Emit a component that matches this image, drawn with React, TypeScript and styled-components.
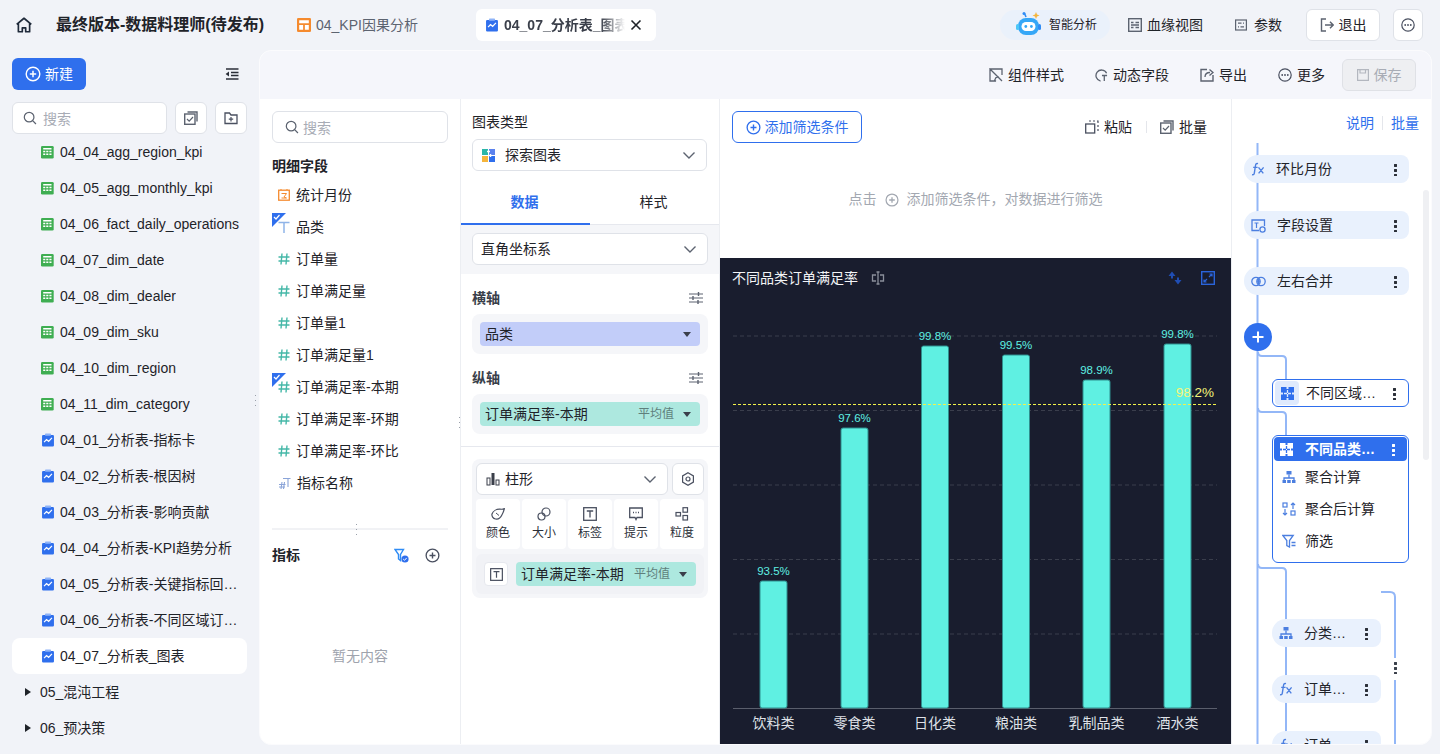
import React from 'react';
import styled, { createGlobalStyle } from 'styled-components';

const Global = createGlobalStyle`
  html, body { margin: 0; padding: 0; height: 100%; overflow: hidden; }
  body { font-family: "Liberation Sans", "Noto Sans CJK SC", sans-serif; font-size: 14px; line-height: 1.5; color: #1f2329; background: #f1f3f8; }
  * { box-sizing: border-box; }
`;

const Page = styled.div`width: 1440px; height: 754px; display: flex; flex-direction: column; background: #f1f3f8; overflow: hidden;`;
const Header = styled.header`height: 50px; flex: none; display: flex; align-items: center; position: relative;`;
const HomeBtn = styled.div`width: 47px; height: 50px; padding-left: 15px; display: flex; align-items: center;`;
const Title = styled.div`margin-left: 9px; width: 233px; font-size: 16px; font-weight: 700; white-space: nowrap; color: #1f2329;`;
const Tab = styled.div`display: flex; align-items: center; gap: 5px; height: 32px; width: 187px; padding-left: 8px; color: #5c6370; font-size: 14px;`;
const ActiveTab = styled.div`display: flex; align-items: center; gap: 5px; height: 32px; width: 180px; padding-left: 9px; background: #fff; border-radius: 6px; font-weight: 700; color: #3a3f4a; font-size: 14px;`;
const FadeText = styled.span`width: 121px; overflow: hidden; white-space: nowrap; -webkit-mask-image: linear-gradient(90deg, #000 80%, transparent 100%); mask-image: linear-gradient(90deg, #000 80%, transparent 100%);`;
const HeaderRight = styled.div`margin-left: auto; margin-right: 17px; display: flex; align-items: center;`;
const AiPill = styled.div`width: 110px; height: 30px; border-radius: 15px; background: #eaf1fb; display: flex; align-items: center; gap: 6px; padding-left: 15px; font-size: 12px; margin-right: 18px; white-space: nowrap;`;
const HeadLink = styled.div<{ $mr: number; $gap: number }>`display: flex; align-items: center; gap: ${p => p.$gap}px; margin-right: ${p => p.$mr}px; font-size: 14px; white-space: nowrap;`;
const WhiteBtn = styled.div<{ $w: number }>`width: ${p => p.$w}px; height: 32px; background: #fff; border: 1px solid #dfe2e8; border-radius: 6px; display: flex; align-items: center; justify-content: center; gap: 5px; font-size: 14px;`;
const Spacer13 = styled.div`width: 13px;`;

const Body = styled.div`flex: 1; display: flex; min-height: 0; padding-bottom: 9px; position: relative;`;
const Sidebar = styled.aside`width: 259px; flex: none; display: flex; flex-direction: column; padding-top: 8px; position: relative; overflow: hidden;`;
const SideTop = styled.div`display: flex; align-items: center; justify-content: space-between; padding: 0 20px 0 12px; height: 32px;`;
const NewBtn = styled.div`width: 74px; height: 32px; border-radius: 6px; background: #2f6fed; color: #fff; display: flex; align-items: center; justify-content: center; gap: 4px; font-size: 14px;`;
const SearchRow = styled.div`display: flex; gap: 8px; margin: 12px 0 0 12px;`;
const SearchBox = styled.div<{ $w: number; $pl: number; $gap: number }>`width: ${p => p.$w}px; height: 32px; background: #fff; border: 1px solid #dfe2e8; border-radius: 6px; display: flex; align-items: center; gap: ${p => p.$gap}px; padding-left: ${p => p.$pl}px; color: #a8acb5; font-size: 14px; line-height: normal; flex: none;`;
const SquareBtn = styled.div`width: 32px; height: 32px; background: #fff; border: 1px solid #dfe2e8; border-radius: 6px; display: flex; align-items: center; justify-content: center; flex: none;`;
const TreeList = styled.div`display: flex; flex-direction: column; margin-left: 12px; width: 235px;`;
const TreeRow = styled.div<{ $active?: boolean; $folder?: boolean }>`height: 36px; display: flex; align-items: center; gap: ${p => p.$folder ? 9 : 5}px; padding-left: ${p => p.$folder ? 13 : 29}px; border-radius: 8px; background: ${p => p.$active ? '#fff' : 'transparent'}; font-size: 14px; color: #1f2329; white-space: nowrap;`;
const Ellip = styled.span`overflow: hidden; text-overflow: ellipsis; white-space: nowrap; min-width: 0;`;
const Arrow = styled.i`width: 0; height: 0; border-left: 6px solid #1f2329; border-top: 4px solid transparent; border-bottom: 4px solid transparent;`;
const Grip = styled.div<{ $l: number; $t: number }>`position: absolute; left: ${p => p.$l}px; top: ${p => p.$t}px; width: 5px; height: 14px; background-image: radial-gradient(circle, #9aa0aa 0.8px, transparent 1px); background-size: 5px 5px; z-index: 5;`;

const Main = styled.main`flex: 1; margin-right: 8px; display: flex; flex-direction: column; border-radius: 12px; background: #fff; border: 1px solid #fbfbfd; overflow: hidden; min-width: 0; position: relative;`;
const Toolbar = styled.div`height: 48px; flex: none; background: #f5f6fb; display: flex; align-items: center; justify-content: flex-end; padding-right: 15px;`;
const ToolItem = styled.div<{ $mr: number }>`display: flex; align-items: center; gap: 5px; margin-right: ${p => p.$mr}px; font-size: 14px; white-space: nowrap;`;
const SaveBtn = styled.div`width: 74px; height: 32px; border: 1px solid #dfe1e6; background: #eeeff2; border-radius: 6px; color: #a8acb5; display: flex; align-items: center; justify-content: center; gap: 5px;`;
const Columns = styled.div`flex: 1; display: flex; min-height: 0;`;

const FieldCol = styled.section`width: 201px; flex: none; border-right: 1px solid #eceef2; padding: 12px 0 0 12px; display: flex; flex-direction: column; position: relative;`;
const SectionTitle = styled.div`font-size: 14px; font-weight: 700; color: #1f2329; line-height: 20px;`;
const DetailTitle = styled(SectionTitle)`margin-top: 13px;`;
const FieldList = styled.div`display: flex; flex-direction: column; margin-top: 3px;`;
const FieldRow = styled.div`height: 32px; display: flex; align-items: center; gap: 6px; padding-left: 6px; position: relative; font-size: 14px; white-space: nowrap;`;
const Corner = styled.svg`position: absolute; left: 0; top: 2px;`;
const FieldDivider = styled.div`width: 176px; height: 2px; background: #f1f2f5; margin-top: 29px; position: relative;`;
const MetricHead = styled.div`width: 176px; display: flex; align-items: center; justify-content: space-between; margin-top: 15px; padding-right: 8px;`;
const MetricIcons = styled.div`display: flex; gap: 16px; align-items: center;`;
const Empty = styled.div`width: 176px; text-align: center; margin-top: 81px; color: #9ea3ad; font-size: 14px;`;

const ConfigCol = styled.section`width: 259px; flex: none; border-right: 1px solid #eceef2; display: flex; flex-direction: column;`;
const ChartType = styled.div`padding: 13px 12px 0 11px; height: 82px;`;
const TypeLabel = styled.div`font-size: 14px; line-height: 20px; margin-bottom: 7px;`;
const SelectBox = styled.div<{ $w?: number; $pl?: number; $gap?: number }>`height: 32px; width: ${p => p.$w ? p.$w + 'px' : '100%'}; border: 1px solid #dfe2e8; border-radius: 6px; background: #fff; display: flex; align-items: center; gap: ${p => p.$gap ?? 5}px; padding: 0 10px 0 ${p => p.$pl ?? 9}px; font-size: 14px;`;
const Grow = styled.span`flex: 1; white-space: nowrap;`;
const Tabs = styled.div`display: flex; height: 44px; border-bottom: 1px solid #e6e8ee;`;
const TabItem = styled.div<{ $on?: boolean }>`width: 128px; flex: 1; display: flex; align-items: center; justify-content: center; padding-right: 2px; font-size: 14px; color: ${p => p.$on ? '#2f6fed' : '#1f2329'}; font-weight: ${p => p.$on ? 700 : 400}; border-bottom: 2px solid ${p => p.$on ? '#2f6fed' : 'transparent'}; margin-bottom: -1px;`;
const CoordStrip = styled.div`height: 49px; background: #f5f6f9; padding: 8px 11px 0 11px;`;
const AxisHead = styled.div`display: flex; align-items: center; justify-content: space-between; padding: 0 16px 0 11px; height: 20px;`;
const AxisTitle = styled.span`font-size: 14px; font-weight: 700; color: #3a3f4a;`;
const AxisBox = styled.div`margin: 6px 11px 0; height: 40px; border-radius: 8px; background: #f5f6f9; padding: 8px;`;
const Pill = styled.div<{ $bg: string; $w?: number }>`height: 24px; width: ${p => p.$w ? p.$w + 'px' : '100%'}; background: ${p => p.$bg}; border-radius: 4px; display: flex; align-items: center; padding: 0 9px 0 5px; font-size: 14px; white-space: nowrap;`;
const PillNote = styled.span`color: #5f7f7c; font-size: 12px; margin-right: 9px;`;
const Caret = styled.i`width: 0; height: 0; border-top: 5px solid #3a3f4a; border-left: 4px solid transparent; border-right: 4px solid transparent;`;
const Gap14 = styled.div`height: 14px;`;
const Divider = styled.div`height: 1px; background: #e6e8ee; margin-top: 12px;`;
const MarkBox = styled.div`margin: 12px 11px 0; height: 139px; border-radius: 8px; background: #f5f6f9; padding: 4px;`;
const MarkTop = styled.div`display: flex; gap: 4px;`;
const MarkGrid = styled.div`display: grid; grid-template-columns: repeat(5, 44px); gap: 2px; margin-top: 4px;`;
const MarkCell = styled.div`height: 50px; background: #fff; border-radius: 4px; display: flex; flex-direction: column; align-items: center; justify-content: center; gap: 3px; font-size: 12px; color: #2b2f38;`;
const MarkRow = styled.div`height: 40px; margin-top: 5px; background: #f1f2f6; border-radius: 6px; display: flex; align-items: center; gap: 8px; padding-left: 8px;`;
const TBtn = styled.div`width: 24px; height: 24px; background: #fff; border: 1px solid #e6e8ee; border-radius: 4px; display: flex; align-items: center; justify-content: center;`;

const CenterCol = styled.section`width: 512px; flex: none; display: flex; flex-direction: column; border-right: 1px solid #eceef2;`;
const FilterArea = styled.div`height: 159px; flex: none; padding: 12px 12px 0; position: relative;`;
const FilterTop = styled.div`display: flex; align-items: center; justify-content: space-between; padding-right: 12px;`;
const AddFilter = styled.div`width: 130px; height: 32px; border: 1px solid #2f6fed; border-radius: 6px; color: #2f6fed; display: flex; align-items: center; justify-content: center; gap: 4px; font-size: 14px;`;
const FilterActions = styled.div`display: flex; align-items: center;`;
const FilterAct = styled.div`display: flex; align-items: center; gap: 5px; font-size: 14px;`;
const VSep = styled.i`width: 1px; height: 12px; background: #e4e6eb; margin: 0 13px 0 14px;`;
const Hint = styled.div`display: flex; align-items: center; justify-content: center; gap: 8px; margin-top: 46px; padding-right: 0; color: #a3a8b1; font-size: 14px;`;
const ChartPanel = styled.div`flex: 1; background: #191d2e; display: flex; flex-direction: column; min-height: 0;`;
const ChartHead = styled.div`height: 40px; flex: none; display: flex; align-items: center; padding: 0 16px 0 12px; color: #f3f4f6; font-size: 14px;`;
const ChartTitle = styled.span`margin-right: 13px; white-space: nowrap;`;
const ChartIcons = styled.div`margin-left: auto; display: flex; gap: 19px; align-items: center;`;
const ChartSvg = styled.svg`display: block; flex: none;`;

const RightCol = styled.aside`flex: 1; position: relative; overflow: hidden; display: flex; flex-direction: column; align-items: flex-start;`;
const Lines = styled.svg`position: absolute; left: 0; top: 0; pointer-events: none;`;
const RightHead = styled.div`height: 56px; width: 100%; flex: none; display: flex; justify-content: flex-end; align-items: flex-start; padding: 15px 12px 0 0; color: #2f6fed; font-size: 14px; line-height: 18px;`;
const HeadSep = styled.i`width: 1px; height: 14px; background: #e4e6eb; margin: 2px 8px 0;`;
const Pipe = styled.div`display: flex; flex-direction: column; gap: 28px; position: relative; z-index: 1; padding-left: 12px;`;
const Node = styled.div`width: 165px; height: 28px; border-radius: 14px 8px 8px 14px; background: #e9f1fd; display: flex; align-items: center; padding-left: 7px; gap: 11px; font-size: 14px;`;
const NodeLabel = styled.span`flex: 1; white-space: nowrap; overflow: hidden; text-overflow: ellipsis; min-width: 0;`;
const Dots = styled.span<{ $light?: boolean; $mr?: number }>`width: 3px; height: 13px; margin-right: ${p => p.$mr ?? 12}px; flex: none; background-image: radial-gradient(circle, ${p => p.$light ? '#fff' : '#2b2f38'} 1.4px, transparent 1.6px); background-size: 3px 5px;`;
const PlusBtn = styled.div`width: 28px; height: 28px; border-radius: 50%; background: #2f6fed; display: flex; align-items: center; justify-content: center;`;
const NodeCard = styled.div`width: 137px; margin-left: 28px; height: 28px; border: 1px solid #2f6fed; border-radius: 6px; background: #fff; display: flex; align-items: center; padding-left: 2px; gap: 7px; font-size: 14px;`;
const IconTile = styled.div`width: 24px; height: 24px; border-radius: 4px; background: #dfeafd; display: flex; align-items: center; justify-content: center; flex: none;`;
const GroupCard = styled.div`width: 137px; margin-left: 28px; height: 128px; border: 1px solid #2f6fed; border-radius: 6px; background: #fff; padding: 1px;`;
const GroupHead = styled.div`height: 24px; border-radius: 4px; background: #2f6fed; color: #fff; font-weight: 700; display: flex; align-items: center; gap: 12px; padding-left: 6px; font-size: 14px;`;
const GroupRow = styled.div`height: 32px; display: flex; align-items: center; gap: 9px; padding-left: 8px; font-size: 14px;`;
const SubPipe = styled.div`display: flex; flex-direction: column; gap: 28px; margin: 56px 0 0 40px; position: relative; z-index: 1;`;
const SubNode = styled(Node)`width: 109px; justify-content: flex-start;`;
const SubLabel = styled.span`width: 44px; flex: none; white-space: nowrap; overflow: hidden; text-overflow: ellipsis; margin-right: auto;`;
const SideDots = styled.span`position: absolute; left: 162px; top: 562px; width: 3px; height: 13px; background-image: radial-gradient(circle, #3a3f4a 1.4px, transparent 1.6px); background-size: 3px 5px; z-index: 2;`;
const Scrollbar = styled.div`position: absolute; right: 2px; top: 91px; width: 6px; height: 270px; border-radius: 3px; background: #eff0f3; z-index: 0;`;
const SvgBox = styled.svg`flex: none;`;

type S = { s?: number; c?: string };
const Svg = ({ s = 14, children, vb = 16 }: { s?: number; children: React.ReactNode; vb?: number }) => (
  <SvgBox width={s} height={s} viewBox={`0 0 ${vb} ${vb}`} fill="none">{children}</SvgBox>
);
const HomeI = () => <Svg s={18}><path d="M1.5 7.5 8 2l6.5 5.5M3 6.5V14h3.5v-3.5h3V14H13V6.5" stroke="#1f2a3a" strokeWidth="1.5" strokeLinejoin="round" /></Svg>;
const Dash = () => <Svg><rect width="16" height="16" rx="1.5" fill="#f58a2e" /><path d="M2.500 2.500h11v3.500h-11zM2.500 8h4.500v5.500h-4.500zM9 8h4.500v5.500H9z" fill="#fff" /></Svg>;
const Analysis = () => <Svg><path d="M2.500 2.200h11a1.300 1.300 0 0 1 1.300 1.300v10.700a1.300 1.300 0 0 1-1.300 1.300h-11a1.300 1.300 0 0 1-1.300-1.300V3.500a1.300 1.300 0 0 1 1.300-1.300z" fill="#2f6fed" /><rect x="4.500" y=".7" width="7" height="2.400" rx="1" fill="#8fb4f8" /><path d="m3.500 10.500 2.800-3 2.400 2 3.800-4" stroke="#fff" strokeWidth="1.400" /></Svg>;
const Table = () => <Svg><rect y="1" width="14.500" height="14.500" rx="1.500" fill="#3fae52" /><path d="M2.500 3.500h9.500v1.600H2.500zM2.500 6.600h2.400v1.800H2.500zM6 6.600h2.400v1.800H6zM9.600 6.600H12v1.800H9.600zM2.500 9.600h2.400v1.800H2.500zM6 9.600h2.400v1.800H6zM9.600 9.600H12v1.800H9.600z" fill="#fff" /></Svg>;
const Search = () => <Svg><circle cx="7" cy="7" r="5.500" stroke="#5c6370" strokeWidth="1.400" /><path d="m11 11 3.800 3.800" stroke="#5c6370" strokeWidth="1.400" /></Svg>;
const PlusCircle = ({ s = 16, c = '#fff' }: S) => <Svg s={s}><circle cx="8" cy="8" r="6.800" stroke={c} strokeWidth="1.400" /><path d="M8 4.800v6.400M4.800 8h6.400" stroke={c} strokeWidth="1.500" /></Svg>;
const Hash = () => <Svg s={12} vb={12}><path d="M4 .5 3 11.500M9 .5l-1 11M.5 4h11M.5 8h11" stroke="#45b8a8" strokeWidth="1.400" /></Svg>;
const TI = ({ c = '#8fb4e8', s = 12 }: S) => <Svg s={s} vb={12}><path d="M.5 1.500h11M6 1.500V12" stroke={c} strokeWidth="1.500" /></Svg>;
const CalI = () => <Svg s={12} vb={12}><rect x=".7" y="1.200" width="10.600" height="10" stroke="#f58a2e" strokeWidth="1.300" /><path d="M3 1V0M9 1V0M3.500 4.500h5L6 8l2.500 1h-5" stroke="#f58a2e" /></Svg>;
const MixI = () => <Svg s={13} vb={13}><path d="M4 5 3 12M6.500 5l-1 7M1 7.500h6.500M1 10h6M5 1.500h7.500M10 1.500V10" stroke="#8aa4d8" strokeWidth="1.100" /></Svg>;
const Chevron = ({ c = '#5c6370' }: S) => <Svg s={14} vb={14}><path d="m1.500 4.500 5.500 5.500 5.500-5.500" stroke={c} strokeWidth="1.400" /></Svg>;
const Sliders = () => <Svg s={14} vb={14}><path d="M0 3h14M0 7h14M0 11h14" stroke="#5c6370" strokeWidth="1.200" /><path d="M9.500 1v4M4 5v4M9 9v4" stroke="#5c6370" strokeWidth="1.400" /></Svg>;
const Explore = () => <Svg s={13} vb={13}><rect width="6" height="6" fill="#2bb6a8" /><rect x="7" width="6" height="6" fill="#5b82ee" /><rect y="7" width="6" height="6" fill="#f5b53c" /><rect x="7" y="7" width="6" height="6" fill="#2f6fed" /><path d="M6.500 0v13M0 6.500h13" stroke="#fff" /><path d="M5 2.500h3M8.500 5v3" stroke="#fff" strokeWidth="1.500" /></Svg>;
const Batch = ({ c = '#5c6370' }: S) => <Svg s={14} vb={14}><rect x=".7" y="3" width="10.300" height="10.300" stroke={c} strokeWidth="1.400" /><path d="M3.500 1h9.500v9.500" stroke={c} strokeWidth="1.400" /><path d="m3 8 2.200 2.200L9 6" stroke={c} strokeWidth="1.200" /></Svg>;
const FolderAdd = () => <Svg s={14} vb={14}><path d="M1 2h4.500L7 4h6v8.500H1z" stroke="#4a5060" strokeWidth="1.300" /><path d="M7 6v4.500M4.800 8.200h4.400" stroke="#4a5060" strokeWidth="1.200" /></Svg>;
const Collapse = () => <Svg s={14} vb={14}><path d="M1 2h12.500M6 5.500h7.500M6 8.500h7.500M1 12h12.500" stroke="#2b2f38" strokeWidth="1.600" /><path d="M4 4.500v5L.6 7z" fill="#2b2f38" /></Svg>;
const Close = () => <Svg s={12} vb={12}><path d="m1.500 1.500 9 9M10.500 1.500l-9 9" stroke="#1f2329" strokeWidth="1.600" /></Svg>;
const Robot = () => <Svg s={28} vb={28}><path d="M11 6 9.500 2.500" stroke="#2f8cf5" strokeWidth="1.600" /><circle cx="9" cy="2.500" r="1.500" fill="#2f8cf5" /><path d="m21 1 1 2.500 2.500 1-2.500 1-1 2.500-1-2.500-2.500-1 2.500-1z" fill="#f5b53c" /><rect x="3" y="7" width="21" height="17" rx="8" fill="#35a7f7" /><rect x="1" y="13" width="3" height="6" rx="1.500" fill="#4cc7f7" /><rect x="23" y="13" width="3" height="6" rx="1.500" fill="#2f8cf5" /><rect x="6.500" y="11" width="14" height="9" rx="4.500" fill="#fff" /><circle cx="10.800" cy="15.500" r="1.400" fill="#35a7f7" /><circle cx="16.400" cy="15.500" r="1.400" fill="#35a7f7" /></Svg>;
const Lineage = () => <Svg s={14} vb={14}><rect x=".7" y=".7" width="12.600" height="12.600" stroke="#5c6370" strokeWidth="1.400" /><path d="M3 4.500h2.500M3 9.500h2.500M7.500 4.500H11M7.500 9.500H11M3 7h8" stroke="#5c6370" strokeWidth="1.300" /></Svg>;
const Param = () => <Svg s={12} vb={12}><rect x=".6" y="1" width="10.800" height="10" stroke="#5c6370" strokeWidth="1.200" /><path d="M3 4.200h3.500M8 4.200h1M3 7.800h1M5.500 7.800H9" stroke="#5c6370" strokeWidth="1.200" /></Svg>;
const Exit = () => <Svg s={14} vb={14}><path d="M6 1H1.500v12H6" stroke="#5c6370" strokeWidth="1.400" /><path d="M5 7h8M10 3.800 13.200 7 10 10.200" stroke="#5c6370" strokeWidth="1.400" /></Svg>;
const More = ({ s = 14 }: S) => <Svg s={s} vb={14}><circle cx="7" cy="7" r="6.200" stroke="#4a5060" strokeWidth="1.200" /><circle cx="4.200" cy="7" r=".9" fill="#4a5060" /><circle cx="7" cy="7" r=".9" fill="#4a5060" /><circle cx="9.800" cy="7" r=".9" fill="#4a5060" /></Svg>;
const StyleI = () => <Svg s={14} vb={14}><path d="M1 1h12v6M7 13H1V1l8 8-2 .5-1.500 3z" stroke="#5c6370" strokeWidth="1.300" /><path d="M9 9l4 4" stroke="#5c6370" strokeWidth="1.300" /></Svg>;
const Dyn = () => <Svg s={13} vb={14}><path d="M12.500 4.500A6 6 0 1 0 6 13" stroke="#5c6370" strokeWidth="1.400" /><path d="M7.500 7H13M10 7v6" stroke="#5c6370" strokeWidth="1.400" /></Svg>;
const Export = () => <Svg s={14} vb={14}><path d="M7 1.500H1v11.500h12V7" stroke="#5c6370" strokeWidth="1.400" /><path d="M5 9c0-3 2-4.500 5-4.500M9.500 1.500l3.500 3-3.500 3" stroke="#5c6370" strokeWidth="1.300" /></Svg>;
const Save = () => <Svg s={12} vb={12}><path d="M.6.6h10.800v10.800H.6zM3 .8v3.200h5.500V.8" stroke="#b3b7bf" strokeWidth="1.200" /></Svg>;
const Paste = () => <Svg s={14} vb={14}><rect x=".7" y="4" width="9" height="9" stroke="#4a5060" strokeWidth="1.300" /><path d="M4 1h2M8 1h2M12 1h1v2M13 5v2M13 9v2" stroke="#4a5060" strokeWidth="1.200" /></Svg>;
const Fx = ({ c = '#4c7fe0' }: S) => <Svg s={14} vb={14}><path d="M7 1.600C5 1 4.600 2.400 4.400 4L3.400 10.600C3.200 12.600 2.400 13 1 12.600M2.200 5.400h4.400M7.500 5.400l4.800 6M12.600 5.400l-5 6" stroke={c} strokeWidth="1.400" /></Svg>;
const FieldSet = () => <Svg s={15} vb={15}><path d="M8 12.500H1V2h12.500v6" stroke="#4c7fe0" strokeWidth="1.300" /><path d="M3.500 5h4M5.500 5v5" stroke="#4c7fe0" strokeWidth="1.200" /><circle cx="11.500" cy="11.500" r="2.600" stroke="#4c7fe0" strokeWidth="1.300" /></Svg>;
const Merge = () => <Svg s={15} vb={15}><circle cx="5" cy="7.500" r="4.200" stroke="#4c7fe0" strokeWidth="1.300" /><circle cx="10" cy="7.500" r="4.200" stroke="#4c7fe0" strokeWidth="1.300" /><path d="M7.500 4.500a4 4 0 0 1 0 6 4 4 0 0 1 0-6z" fill="#4c7fe0" /></Svg>;
const Puzzle = ({ c = '#2f6fed', k = '#dfeafd' }: { c?: string; k?: string }) => <Svg s={13} vb={13}><path d="M0 0h5.500v2h2V0H13v5.500h-2v2h2V13H7.500v-2h-2v2H0V7.500h2v-2H0z" fill={c} /><path d="M6.500 3v3M3 6.500h3M7 6.500h3M6.500 7v3" stroke={k} strokeWidth="1.300" /></Svg>;
const Agg = () => <Svg s={14} vb={14}><rect x="4.500" y="1" width="5" height="3.500" fill="#4c7fe0" /><path d="M7 4.500V8M2 11V8h10v3" stroke="#4c7fe0" strokeWidth="1.300" /><rect x=".5" y="10" width="3.500" height="3" fill="#4c7fe0" /><rect x="5.200" y="10" width="3.500" height="3" fill="#4c7fe0" /><rect x="10" y="10" width="3.500" height="3" fill="#4c7fe0" /></Svg>;
const AggAfter = () => <Svg s={14} vb={14}><rect x="1" y="1" width="4" height="4" stroke="#4c7fe0" strokeWidth="1.200" /><rect x="9" y="9" width="4" height="4" stroke="#4c7fe0" strokeWidth="1.200" /><path d="M11 7V1M9 3l2-2 2 2M3 7v6M1 11l2 2 2-2" stroke="#4c7fe0" strokeWidth="1.200" /></Svg>;
const Filter = () => <Svg s={14} vb={14}><path d="M.8 1.500h10.400L7.500 6.500V13L4.800 11.500v-5z" stroke="#4c7fe0" strokeWidth="1.300" /><path d="M9.500 8.500h4M9.500 11.500h4" stroke="#4c7fe0" strokeWidth="1.300" /></Svg>;
const FilterCheck = () => <Svg s={15} vb={15}><path d="M1 1.500h8.500L6.500 6.500v6L4.500 11V6.500z" stroke="#2f8cf5" strokeWidth="1.400" /><circle cx="11" cy="11" r="3.600" fill="#2f6fed" /><path d="m9.200 11 1.300 1.300 2.200-2.400" stroke="#fff" /></Svg>;
const Bars = () => <Svg s={14} vb={14}><rect x="1" y="6" width="3" height="7" stroke="#3a3f4a" /><rect x="5.500" y="1" width="3" height="12" fill="#3a3f4a" /><rect x="10" y="8" width="3" height="5" stroke="#3a3f4a" /></Svg>;
const Gear = () => <Svg s={14} vb={14}><path d="M7 .8 12.400 3.900v6.200L7 13.200 1.600 10.100V3.900z" stroke="#4a5060" strokeWidth="1.200" /><circle cx="7" cy="7" r="2" stroke="#4a5060" strokeWidth="1.200" /></Svg>;
const Palette = () => <Svg s={14} vb={14}><path d="M1 7c1-3 4.500-5 8-4.800 1.500.1 4 0 4.500-1-.5 2-1 4-2.500 6.500C9.500 11 7 12.500 4.500 12 2 11.500.5 9 1 7z" stroke="#4a5060" strokeWidth="1.200" /><path d="M5 6l3 2.500" stroke="#4a5060" /></Svg>;
const Size = () => <Svg s={14} vb={14}><circle cx="9" cy="5" r="4" stroke="#4a5060" strokeWidth="1.200" /><circle cx="4.500" cy="9.500" r="3.500" stroke="#4a5060" strokeWidth="1.200" /></Svg>;
const LabelI = ({ s = 14 }: S) => <Svg s={s} vb={14}><rect x=".7" y=".7" width="12.600" height="12.600" stroke="#4a5060" strokeWidth="1.300" /><path d="M3.800 4h6.400M7 4v6.500" stroke="#4a5060" strokeWidth="1.300" /></Svg>;
const Tip = () => <Svg s={14} vb={14}><path d="M.7 1h12.600v9.500H8L7 12.500 6 10.500H.7z" stroke="#4a5060" strokeWidth="1.300" /><path d="M4 5.500h1M6.500 5.500h1M9 5.500h1" stroke="#4a5060" strokeWidth="1.300" /></Svg>;
const Grain = () => <Svg s={14} vb={14}><rect x="8" y=".7" width="4.500" height="4.500" stroke="#4a5060" strokeWidth="1.200" /><rect x="1" y="5.500" width="4.500" height="3.500" stroke="#4a5060" strokeWidth="1.200" /><rect x="8" y="8.500" width="4.500" height="4.500" stroke="#4a5060" strokeWidth="1.200" /></Svg>;
const Resize = () => <Svg s={14} vb={14}><path d="M5 4H1.500v6H5M9 4h3.500v6H9" stroke="#8a8f9b" strokeWidth="1.300" /><path d="M5.500 1h3M5.500 13h3M7 1v12" stroke="#8a8f9b" strokeWidth="1.300" /></Svg>;
const Swap = () => <Svg s={14} vb={14}><path d="M.5 5 4 .5 7.500 5H5v2.500H3V5zM6.500 9H9V6.500h2V9h2.500L10 13.500z" fill="#1f4db3" /></Svg>;
const Expand = () => <Svg s={14} vb={14}><rect x=".7" y=".7" width="12.600" height="12.600" stroke="#2a64db" strokeWidth="1.400" /><path d="M8 6l3-3M8.500 3H11v2.500M6 8l-3 3M3 8.500V11h2.500" stroke="#2a64db" strokeWidth="1.200" /></Svg>;
const PlusW = () => <Svg s={14} vb={14}><path d="M7 1.500v11M1.500 7h11" stroke="#fff" strokeWidth="2" /></Svg>;
const CornerMark = () => <Corner width="14" height="14" viewBox="0 0 14 14"><path d="M0 0h14L0 14z" fill="#2f6fed" /><path d="m2 4 2 2 3.500-4" stroke="#fff" strokeWidth="1.200" fill="none" /></Corner>;

const tables = ['04_04_agg_region_kpi', '04_05_agg_monthly_kpi', '04_06_fact_daily_operations', '04_07_dim_date', '04_08_dim_dealer', '04_09_dim_sku', '04_10_dim_region', '04_11_dim_category'];
const charts = ['04_01_分析表-指标卡', '04_02_分析表-根因树', '04_03_分析表-影响贡献', '04_04_分析表-KPI趋势分析', '04_05_分析表-关键指标回顾分析', '04_06_分析表-不同区域订单满足率', '04_07_分析表_图表'];
const fields: { n: string; i: React.ReactNode; m?: boolean }[] = [
  { n: '统计月份', i: <CalI /> }, { n: '品类', i: <TI />, m: true }, { n: '订单量', i: <Hash /> }, { n: '订单满足量', i: <Hash /> },
  { n: '订单量1', i: <Hash /> }, { n: '订单满足量1', i: <Hash /> }, { n: '订单满足率-本期', i: <Hash />, m: true },
  { n: '订单满足率-环期', i: <Hash /> }, { n: '订单满足率-环比', i: <Hash /> }, { n: '指标名称', i: <MixI /> },
];
const marks: [string, React.ReactNode][] = [['颜色', <Palette />], ['大小', <Size />], ['标签', <LabelI />], ['提示', <Tip />], ['粒度', <Grain />]];
const bars = [
  { n: '饮料类', v: '93.5%', x: 40, top: 581 }, { n: '零食类', v: '97.6%', x: 121, top: 428 }, { n: '日化类', v: '99.8%', x: 201.500, top: 346 },
  { n: '粮油类', v: '99.5%', x: 282.500, top: 355 }, { n: '乳制品类', v: '98.9%', x: 363, top: 380 }, { n: '酒水类', v: '99.8%', x: 444, top: 344 },
];
const OY = 298;
const FONT = '"Liberation Sans","Noto Sans CJK SC",sans-serif';

function Chart() {
  return (
    <ChartSvg width={511} height={447} viewBox="0 0 511 447">
      {[336, 410.500, 485, 559.500, 634].map(y => <line key={y} x1="13" x2="497" y1={y - OY} y2={y - OY} stroke="#3a3e4c" strokeDasharray="4 3" />)}
      <line x1="13" x2="497" y1={708.500 - OY} y2={708.500 - OY} stroke="#5a5e6c" />
      {bars.map(b => (
        <g key={b.n}>
          <rect x={b.x} y={b.top - OY} width="27" height={708 - b.top} rx="2" fill="#5ff0e2" stroke="#2f8f8e" />
          <text x={b.x + 13.500} y={b.top - OY - 6} textAnchor="middle" fontSize="11.500" fill="#5ff0e2" fontFamily={FONT}>{b.v}</text>
          <text x={b.x + 13.500} y={728 - OY} textAnchor="middle" fontSize="14" fill="#dfe1e7" fontFamily={FONT}>{b.n}</text>
        </g>
      ))}
      <line x1="13" x2="497" y1={404.500 - OY} y2={404.500 - OY} stroke="#f2f24a" strokeDasharray="3 2" />
      <text x="494" y={397 - OY} textAnchor="end" fontSize="13.500" fill="#f5f57a" fontFamily={FONT}>98.2%</text>
    </ChartSvg>
  );
}

export default function App() {
  return (
    <Page>
      <Global />
      <Header>
        <HomeBtn><HomeI /></HomeBtn>
        <Title>最终版本-数据料理师(待发布)</Title>
        <Tab><Dash />04_KPI因果分析</Tab>
        <ActiveTab><Analysis /><FadeText>04_07_分析表_图表</FadeText><Close /></ActiveTab>
        <HeaderRight>
          <AiPill><Robot />智能分析</AiPill>
          <HeadLink $mr={32} $gap={5}><Lineage />血缘视图</HeadLink>
          <HeadLink $mr={24} $gap={7}><Param />参数</HeadLink>
          <WhiteBtn $w={74}><Exit />退出</WhiteBtn>
          <Spacer13 />
          <WhiteBtn $w={30}><More /></WhiteBtn>
        </HeaderRight>
      </Header>
      <Body>
        <Sidebar>
          <SideTop><NewBtn><PlusCircle />新建</NewBtn><Collapse /></SideTop>
          <SearchRow>
            <SearchBox $w={155} $pl={10} $gap={6}><Search />搜索</SearchBox>
            <SquareBtn><Batch /></SquareBtn>
            <SquareBtn><FolderAdd /></SquareBtn>
          </SearchRow>
          <TreeList>
            {tables.map(t => <TreeRow key={t}><Table /><Ellip>{t}</Ellip></TreeRow>)}
            {charts.map((t, i) => <TreeRow key={t} $active={i === 6}><Analysis /><Ellip>{t}</Ellip></TreeRow>)}
            <TreeRow $folder><Arrow />05_混沌工程</TreeRow>
            <TreeRow $folder><Arrow />06_预决策</TreeRow>
          </TreeList>
        </Sidebar>
        <Grip $l={253} $t={343} />
        <Main>
          <Toolbar>
            <ToolItem $mr={31}><StyleI />组件样式</ToolItem>
            <ToolItem $mr={31}><Dyn />动态字段</ToolItem>
            <ToolItem $mr={31}><Export />导出</ToolItem>
            <ToolItem $mr={17}><More />更多</ToolItem>
            <SaveBtn><Save />保存</SaveBtn>
          </Toolbar>
          <Columns>
            <FieldCol>
              <SearchBox $w={176} $pl={12} $gap={4}><Search />搜索</SearchBox>
              <DetailTitle>明细字段</DetailTitle>
              <FieldList>
                {fields.map(f => <FieldRow key={f.n}>{f.m && <CornerMark />}{f.i}{f.n}</FieldRow>)}
              </FieldList>
              <FieldDivider><Grip $l={82} $t={-6} /></FieldDivider>
              <MetricHead>
                <SectionTitle>指标</SectionTitle>
                <MetricIcons><FilterCheck /><PlusCircle s={15} c="#4a5060" /></MetricIcons>
              </MetricHead>
              <Empty>暂无内容</Empty>
              <Grip $l={197} $t={316} />
            </FieldCol>
            <ConfigCol>
              <ChartType>
                <TypeLabel>图表类型</TypeLabel>
                <SelectBox $gap={6}><Explore /><Grow>&nbsp;探索图表</Grow><Chevron /></SelectBox>
              </ChartType>
              <Tabs><TabItem $on>数据</TabItem><TabItem>样式</TabItem></Tabs>
              <CoordStrip><SelectBox $w={236} $pl={8}><Grow>直角坐标系</Grow><Chevron /></SelectBox></CoordStrip>
              <Gap14 />
              <AxisHead><AxisTitle>横轴</AxisTitle><Sliders /></AxisHead>
              <AxisBox><Pill $bg="#c2cdf9"><Grow>品类</Grow><Caret /></Pill></AxisBox>
              <Gap14 />
              <AxisHead><AxisTitle>纵轴</AxisTitle><Sliders /></AxisHead>
              <AxisBox><Pill $bg="#ade8df"><Grow>订单满足率-本期</Grow><PillNote>平均值</PillNote><Caret /></Pill></AxisBox>
              <Divider />
              <MarkBox>
                <MarkTop>
                  <SelectBox $w={192}><Bars /><Grow>柱形</Grow><Chevron /></SelectBox>
                  <WhiteBtn $w={32}><Gear /></WhiteBtn>
                </MarkTop>
                <MarkGrid>{marks.map(([n, i]) => <MarkCell key={n}>{i}{n}</MarkCell>)}</MarkGrid>
                <MarkRow>
                  <TBtn><LabelI s={13} /></TBtn>
                  <Pill $bg="#ade8df" $w={180}><Grow>订单满足率-本期</Grow><PillNote>平均值</PillNote><Caret /></Pill>
                </MarkRow>
              </MarkBox>
            </ConfigCol>
            <CenterCol>
              <FilterArea>
                <FilterTop>
                  <AddFilter><PlusCircle s={15} c="#2f6fed" />添加筛选条件</AddFilter>
                  <FilterActions>
                    <FilterAct><Paste />粘贴</FilterAct><VSep />
                    <FilterAct><Batch />批量</FilterAct>
                  </FilterActions>
                </FilterTop>
                <Hint>点击<PlusCircle s={14} c="#a3a8b1" />添加筛选条件，对数据进行筛选</Hint>
              </FilterArea>
              <ChartPanel>
                <ChartHead>
                  <ChartTitle>不同品类订单满足率</ChartTitle><Resize />
                  <ChartIcons><Swap /><Expand /></ChartIcons>
                </ChartHead>
                <Chart />
              </ChartPanel>
            </CenterCol>
            <RightCol>
              <Scrollbar />
              <Lines width="199" height="646" viewBox="1232 99 199 646" fill="none" stroke="#93b7f7" strokeWidth="2">
                <path d="M1257.500 143V745" />
                <path d="M1258 352q0 4 4 4h20q4 0 4 4v20" />
                <path d="M1258 408q0 4 4 4h20q4 0 4 4v20" />
                <path d="M1258 564q0 4 4 4h20q4 0 4 4v173" />
                <path d="M1381 592h9q5 0 5 5v61M1395 680v65" />
              </Lines>
              <SideDots />
              <RightHead>说明<HeadSep />批量</RightHead>
              <Pipe>
                <Node><Fx /><NodeLabel>环比月份</NodeLabel><Dots /></Node>
                <Node><FieldSet /><NodeLabel>字段设置</NodeLabel><Dots /></Node>
                <Node><Merge /><NodeLabel>左右合并</NodeLabel><Dots /></Node>
                <PlusBtn><PlusW /></PlusBtn>
                <NodeCard><IconTile><Puzzle /></IconTile><NodeLabel>不同区域订单满足率</NodeLabel><Dots /></NodeCard>
                <GroupCard>
                  <GroupHead><Puzzle c="#fff" k="#2f6fed" /><NodeLabel>不同品类订单满足率</NodeLabel><Dots $light /></GroupHead>
                  <GroupRow><Agg />聚合计算</GroupRow>
                  <GroupRow><AggAfter />聚合后计算</GroupRow>
                  <GroupRow><Filter />筛选</GroupRow>
                </GroupCard>
              </Pipe>
              <SubPipe>
                <SubNode><Agg /><SubLabel>分类汇总计算</SubLabel><Dots $mr={13} /></SubNode>
                <SubNode><Fx /><SubLabel>订单满足率</SubLabel><Dots $mr={13} /></SubNode>
                <SubNode><Fx /><SubLabel>订单满足量</SubLabel><Dots $mr={13} /></SubNode>
              </SubPipe>
            </RightCol>
          </Columns>
        </Main>
      </Body>
    </Page>
  );
}
